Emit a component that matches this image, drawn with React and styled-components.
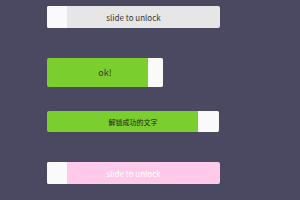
import React from 'react'
import styled, { createGlobalStyle } from 'styled-components'

const Global = createGlobalStyle`
  html, body {
    margin: 0;
    padding: 0;
    background: #4a4961;
    font-family: "Noto Sans CJK SC", "Liberation Sans", sans-serif;
  }
`

const Page = styled.div`
  display: flex;
  flex-direction: column;
  align-items: flex-start;
  padding: 6px 0 0 47px;
`

const Track = styled.div`
  position: relative;
  display: flex;
  width: ${p => p.w}px;
  height: ${p => p.h}px;
  margin-top: ${p => p.mt || 0}px;
  background: ${p => p.bg};
  border-radius: 2px;
  overflow: hidden;
`

const Label = styled.span`
  position: absolute;
  inset: 0;
  display: flex;
  align-items: center;
  justify-content: center;
  font-size: ${p => p.fs}px;
  color: ${p => p.color};
`

const Handle = styled.div`
  width: ${p => p.w}px;
  height: 100%;
  background: #fafafa;
  flex-shrink: 0;
  margin-left: ${p => (p.end ? 'auto' : '0')};
  position: relative;
  z-index: 1;
`

export default function App() {
  return (
    <Page>
      <Global />
      <Track w={173} h={22} bg="#e6e6e6">
        <Handle w={20} />
        <Label fs={8} color="#333">slide to unlock</Label>
      </Track>

      <Track w={116} h={29} mt={30} bg="#7ace2e">
        <Label fs={9} color="#333">ok!</Label>
        <Handle w={15} end />
      </Track>

      <Track w={172} h={21} mt={24} bg="#7ace2e">
        <Label fs={7} color="#222">解锁成功的文字</Label>
        <Handle w={21} end />
      </Track>

      <Track w={173} h={22} mt={30} bg="#ffc9e9">
        <Handle w={20} />
        <Label fs={8} color="#fff">slide to unlock</Label>
      </Track>
    </Page>
  )
}
